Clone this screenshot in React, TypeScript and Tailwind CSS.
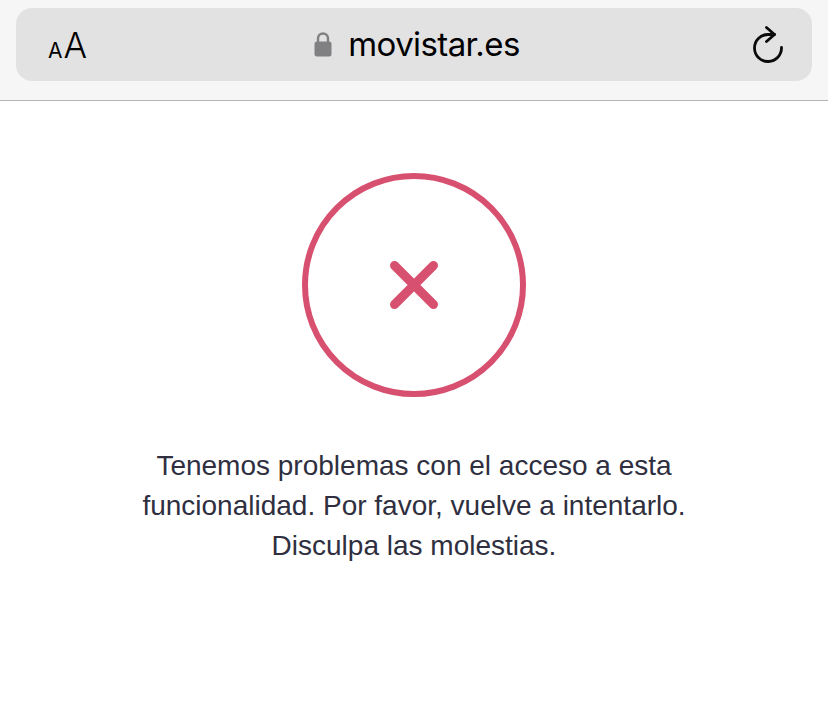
export default function App() {
  return (
    <div className="w-[828px] h-[714px] bg-white flex flex-col overflow-hidden font-['Liberation_Sans',sans-serif]">
      {/* barra del navegador */}
      <header className="h-[101px] shrink-0 bg-[#f6f6f6] border-b border-[#b4b4b4] px-4 pt-2">
        <div className="h-[73px] rounded-2xl bg-[#e2e2e3] flex items-center justify-between pl-8 pr-[28px]">
          <div className="w-[38px] flex items-baseline text-black font-['Inter',sans-serif] leading-none pt-[2px]">
            <span className="text-[21px] mr-[1px]">A</span>
            <span className="text-[35px] font-light">A</span>
          </div>
          <div className="flex items-center gap-[16px] -ml-[2px]">
            <svg width="18" height="26" viewBox="0 0 18 26" fill="none" className="-mt-[2px]">
              <path d="M4 12V7.5a5 5 0 0 1 10 0V12" stroke="#808083" strokeWidth="2.4" />
              <rect x="0.5" y="10.5" width="17" height="15" rx="2.5" fill="#808083" />
            </svg>
            <span className="text-[33px] leading-none text-black font-['Inter',sans-serif] tracking-[-0.6px]">movistar.es</span>
          </div>
          <svg width="34" height="38" viewBox="0 0 34 38" fill="none" stroke="#0a0a0a" strokeWidth="2.8" strokeLinecap="round" strokeLinejoin="round">
            <path d="M24.5 8.5H18A13.5 13.5 0 1 0 31.5 21.5" />
            <path d="M16.5 1.5l8 7-8 7" />
          </svg>
        </div>
      </header>

      {/* contenido */}
      <main className="flex flex-col items-center pt-[72px]">
        <div className="w-[224px] h-[224px] rounded-full border-[6px] border-[#d7506f] flex items-center justify-center">
          <svg width="48" height="48" viewBox="0 0 48 48" fill="none" stroke="#d7506f" strokeWidth="9" strokeLinecap="round">
            <path d="M4.5 4.5l39 39M43.5 4.5l-39 39" />
          </svg>
        </div>
        <p className="mt-[49px] w-[600px] text-center text-[28px] leading-[40px] text-[#2f2f3f]">
          Tenemos problemas con el acceso a esta
          <br />
          funcionalidad. Por favor, vuelve a intentarlo.
          <br />
          Disculpa las molestias.
        </p>
      </main>
    </div>
  );
}
